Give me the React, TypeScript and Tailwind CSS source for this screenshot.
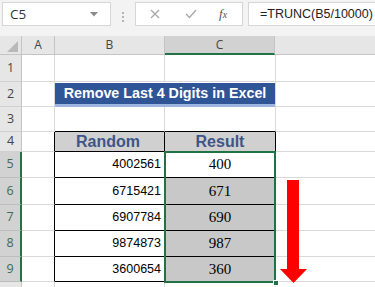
import React from "react";

const rows = [
  { n: 1, h: "h-[27px]" },
  { n: 2, h: "h-[25px]" },
  { n: 3, h: "h-[25px]" },
  { n: 4, h: "h-[20px]" },
  { n: 5, h: "h-[26px]", b: "4002561", c: "400" },
  { n: 6, h: "h-[27px]", b: "6715421", c: "671" },
  { n: 7, h: "h-[26px]", b: "6907784", c: "690" },
  { n: 8, h: "h-[26px]", b: "9874873", c: "987" },
  { n: 9, h: "h-[25px]", b: "3600654", c: "360" },
  { n: 10, h: "h-[25px]" },
];

const ui = "font-['Open_Sans','Liberation_Sans',sans-serif]";

const FormulaBar: React.FC = () => (
  <div className={`flex h-[36px] bg-[#f3f3f3] pt-[2px] ${ui}`}>
    <div className="ml-[2px] flex h-[24px] w-[109px] items-center justify-between border border-[#d6d6d6] bg-white pl-[7px] pr-[12px] text-[13.5px] text-[#333]">
      <span>C5</span>
      <svg width="8" height="5" viewBox="0 0 8 5">
        <path d="M0 0 L8 0 L4 4.5 Z" fill="#8a8a8a" />
      </svg>
    </div>
    <div className="flex w-[24px] flex-col items-center justify-center gap-[2px] pb-[4px]">
      <span className="h-[2px] w-[2px] bg-[#b5b5b5]" />
      <span className="h-[2px] w-[2px] bg-[#b5b5b5]" />
      <span className="h-[2px] w-[2px] bg-[#b5b5b5]" />
    </div>
    <div className="flex h-[24px] w-[108px] items-center border border-[#d6d6d6] bg-white">
      <svg className="ml-[14px]" width="10" height="10" viewBox="0 0 10 10">
        <path d="M1 1 L9 9 M9 1 L1 9" stroke="#a8a8a8" strokeWidth="1.3" />
      </svg>
      <svg className="ml-[25px]" width="12" height="10" viewBox="0 0 12 10">
        <path d="M1 5 L4.5 8.5 L11 1" stroke="#a8a8a8" strokeWidth="1.4" fill="none" />
      </svg>
      <span className="ml-[22px] font-['Liberation_Serif',serif] text-[13px] italic text-[#555]">
        f<span className="text-[10px]">x</span>
      </span>
    </div>
    <div className="ml-[5px] flex h-[24px] flex-1 items-center border border-r-0 border-[#d6d6d6] bg-white pl-[11px] font-['Liberation_Sans',sans-serif] text-[12.5px] text-[#222]">
      =TRUNC(B5/10000)
    </div>
  </div>
);

const ColumnHeaders: React.FC = () => (
  <div className={`flex h-[19px] bg-[#e6e6e6] text-[12px] text-[#444] ${ui}`}>
    <div className="flex w-[22px] items-end justify-end border-r border-b border-[#c4c4c4] pr-[3px] pb-[2px]">
      <svg width="11" height="11" viewBox="0 0 11 11">
        <path d="M11 0 L11 11 L0 11 Z" fill="#b9b9b9" />
      </svg>
    </div>
    <div className="flex w-[33px] items-center justify-center border-r border-b border-[#c4c4c4]">A</div>
    <div className="flex w-[110px] items-center justify-center border-r border-b border-[#c4c4c4]">B</div>
    <div className="flex w-[110px] items-center justify-center border-r border-b-2 border-r-[#c4c4c4] border-b-[#217346] bg-[#d2d2d2]">
      C
    </div>
    <div className="flex-1 border-b border-[#c4c4c4]" />
  </div>
);

const Row: React.FC<{ r: (typeof rows)[number] }> = ({ r }) => {
  const sel = r.n >= 5 && r.n <= 9;
  const inTable = r.n >= 4 && r.n <= 9;
  const grid = "border-[#d9d9d9]";
  const tb = inTable || r.n === 3;
  return (
    <div className={`flex ${r.h}`}>
      <div
        className={`flex w-[22px] items-center justify-center border-b text-[12.5px] ${ui} ${
          sel
            ? "border-r-2 border-r-[#217346] border-b-[#bdbdbd] bg-[#d2d2d2] text-[#3d6b50]"
            : "border-r border-r-[#c4c4c4] border-b-[#d0d0d0] bg-[#e6e6e6] text-[#444]"
        }`}
      >
        {r.n < 10 ? r.n : null}
      </div>
      <div className={`w-[33px] border-b ${sel ? "w-[32px]" : ""} ${grid} border-r ${inTable ? "border-r-black" : ""}`} />
      {r.n === 2 ? (
        <div className="flex w-[221px] flex-col border-r border-[#d9d9d9]">
          <div className="mt-[1px] flex flex-1 items-center justify-center bg-[#2f5597] font-['Liberation_Sans',sans-serif] text-[14.3px] font-bold text-white">
            Remove Last 4 Digits in Excel
          </div>
          <div className="h-[3px] bg-[#9db6e0]" />
        </div>
      ) : (
        <>
          <div
            className={`flex w-[110px] items-center justify-end border-r border-b pr-[3px] font-['Liberation_Sans',sans-serif] text-[12.5px] text-black ${
              tb ? "border-b-black" : "border-b-[#d9d9d9]"
            } ${inTable ? "border-r-black" : "border-r-[#d9d9d9]"} ${r.n === 4 ? "bg-[#d0d0d0]" : ""}`}
          >
            {r.n === 4 ? (
              <span className="w-full text-center text-[16px] font-bold text-[#3e5687]">Random</span>
            ) : (
              r.b
            )}
          </div>
          <div
            className={`flex w-[111px] items-center justify-center border-r border-b font-['Liberation_Serif',serif] text-[15px] text-black ${
              tb ? "border-b-black" : "border-b-[#d9d9d9]"
            } ${inTable ? "border-r-black" : "border-r-[#d9d9d9]"} ${
              r.n === 4 ? "bg-[#d0d0d0]" : sel && r.n > 5 ? "bg-[#c8c8c8]" : ""
            }`}
          >
            {r.n === 4 ? (
              <span className="font-['Liberation_Sans',sans-serif] text-[16px] font-bold text-[#3e5687]">Result</span>
            ) : (
              r.c
            )}
          </div>
        </>
      )}
      <div className="flex-1 border-b border-[#d9d9d9]" />
    </div>
  );
};

export default function App() {
  return (
    <div className="h-[287px] w-[375px] overflow-hidden bg-white">
      <FormulaBar />
      <ColumnHeaders />
      <div className="relative">
        {rows.map((r) => (
          <Row key={r.n} r={r} />
        ))}
        {/* selection outline C5:C9 */}
        <div className="pointer-events-none absolute left-[164px] top-[96px] h-[132px] w-[112px] border-2 border-[#217346]" />
        <div className="absolute left-[273px] top-[225px] h-[6px] w-[6px] border border-white bg-[#217346]" />
        {/* red arrow */}
        <svg className="absolute left-[280px] top-[125px]" width="28" height="104" viewBox="0 0 28 104">
          <path d="M7 0 H19 V89 H27 L13.5 103 L0 89 H7 Z" fill="#ff0000" />
        </svg>
      </div>
    </div>
  );
}
